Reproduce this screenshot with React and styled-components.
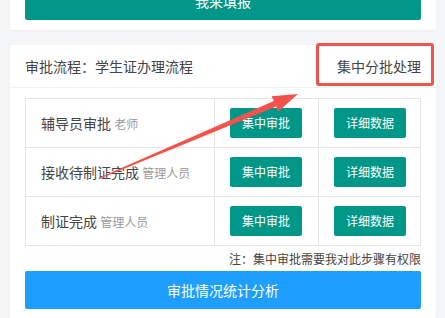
import React from 'react';
import styled, { createGlobalStyle } from 'styled-components';

const GlobalStyle = createGlobalStyle`
  html, body {
    margin: 0;
    padding: 0;
    background: #f4f5f7;
  }
  body {
    font-family: "Noto Sans CJK SC", "Noto Sans", sans-serif;
    color: #333;
    overflow: hidden;
  }
`;

const steps = [
  { name: '辅导员审批', role: '老师' },
  { name: '接收待制证完成', role: '管理人员' },
  { name: '制证完成', role: '管理人员' },
];

export default function App() {
  return (
    <>
      <GlobalStyle />
      <StyledPage>
        <StyledCard>
          <StyledBody>
            <StyledBlockButton color="#009688">我来填报</StyledBlockButton>
          </StyledBody>
        </StyledCard>

        <StyledCard>
          <StyledHeader>
            <span>审批流程：学生证办理流程</span>
            <span>集中分批处理</span>
          </StyledHeader>
          <StyledBody>
            <StyledTable>
              <colgroup>
                <col style={{ width: 189 }} />
                <col style={{ width: 104 }} />
                <col />
              </colgroup>
              <tbody>
                {steps.map(step => (
                  <tr key={step.name}>
                    <td>
                      {step.name} <StyledRole>{step.role}</StyledRole>
                    </td>
                    <td><StyledSmallButton>集中审批</StyledSmallButton></td>
                    <td><StyledSmallButton>详细数据</StyledSmallButton></td>
                  </tr>
                ))}
              </tbody>
            </StyledTable>
            <StyledNote>注：集中审批需要我对此步骤有权限</StyledNote>
            <StyledBlockButton color="#1e9fff">审批情况统计分析</StyledBlockButton>
          </StyledBody>
        </StyledCard>
      </StyledPage>

      <StyledMarkBox />
      <StyledArrow width="445" height="318" viewBox="0 0 445 318">
        <polygon
          points="100.3,178.6 276.2,106.6 278.3,111.6 298,94 271.6,96.2 273.8,101 99.7,177.4"
          fill="#f4524d"
        />
      </StyledArrow>
    </>
  );
}

const StyledPage = styled.div`
  display: flex;
  flex-direction: column;
  gap: 15px;
  margin-top: -28px;
  padding: 0 9px 0 10px;
`;

const StyledCard = styled.div`
  background: #fff;
  border-radius: 2px;
  box-shadow: 0 1px 2px rgba(0, 0, 0, 0.04);
`;

const StyledHeader = styled.div`
  display: flex;
  justify-content: space-between;
  align-items: center;
  height: 42px;
  padding: 0 15px;
  border-bottom: 1px solid #f2f2f2;
  font-size: 14px;
  color: #444;
`;

const StyledBody = styled.div`
  padding: 10px 15px;
  display: flex;
  flex-direction: column;
`;

const StyledBlockButton = styled.div`
  height: 38px;
  line-height: 38px;
  text-align: center;
  border-radius: 2px;
  background: ${p => p.color};
  color: #fff;
  font-size: 14px;
`;

const StyledTable = styled.table`
  width: 100%;
  border-collapse: collapse;
  table-layout: fixed;

  td {
    border: 1px solid #e4e4e4;
    padding: 9px 15px;
    height: 30px;
    font-size: 14px;
    color: #444;
    white-space: nowrap;
    vertical-align: middle;
  }
`;

const StyledRole = styled.span`
  font-size: 12px;
  color: #999;
`;

const StyledSmallButton = styled.div`
  display: inline-block;
  height: 30px;
  line-height: 30px;
  padding: 0 12px;
  border-radius: 2px;
  background: #009688;
  color: #fff;
  font-size: 12px;
`;

const StyledNote = styled.div`
  text-align: right;
  font-size: 12px;
  line-height: 25px;
  color: #444;
`;

const StyledMarkBox = styled.div`
  position: absolute;
  left: 316px;
  top: 43px;
  width: 112px;
  height: 37px;
  border: 3px solid #f4524d;
  border-radius: 3px;
`;

const StyledArrow = styled.svg`
  position: absolute;
  left: 0;
  top: 0;
  pointer-events: none;
`;
